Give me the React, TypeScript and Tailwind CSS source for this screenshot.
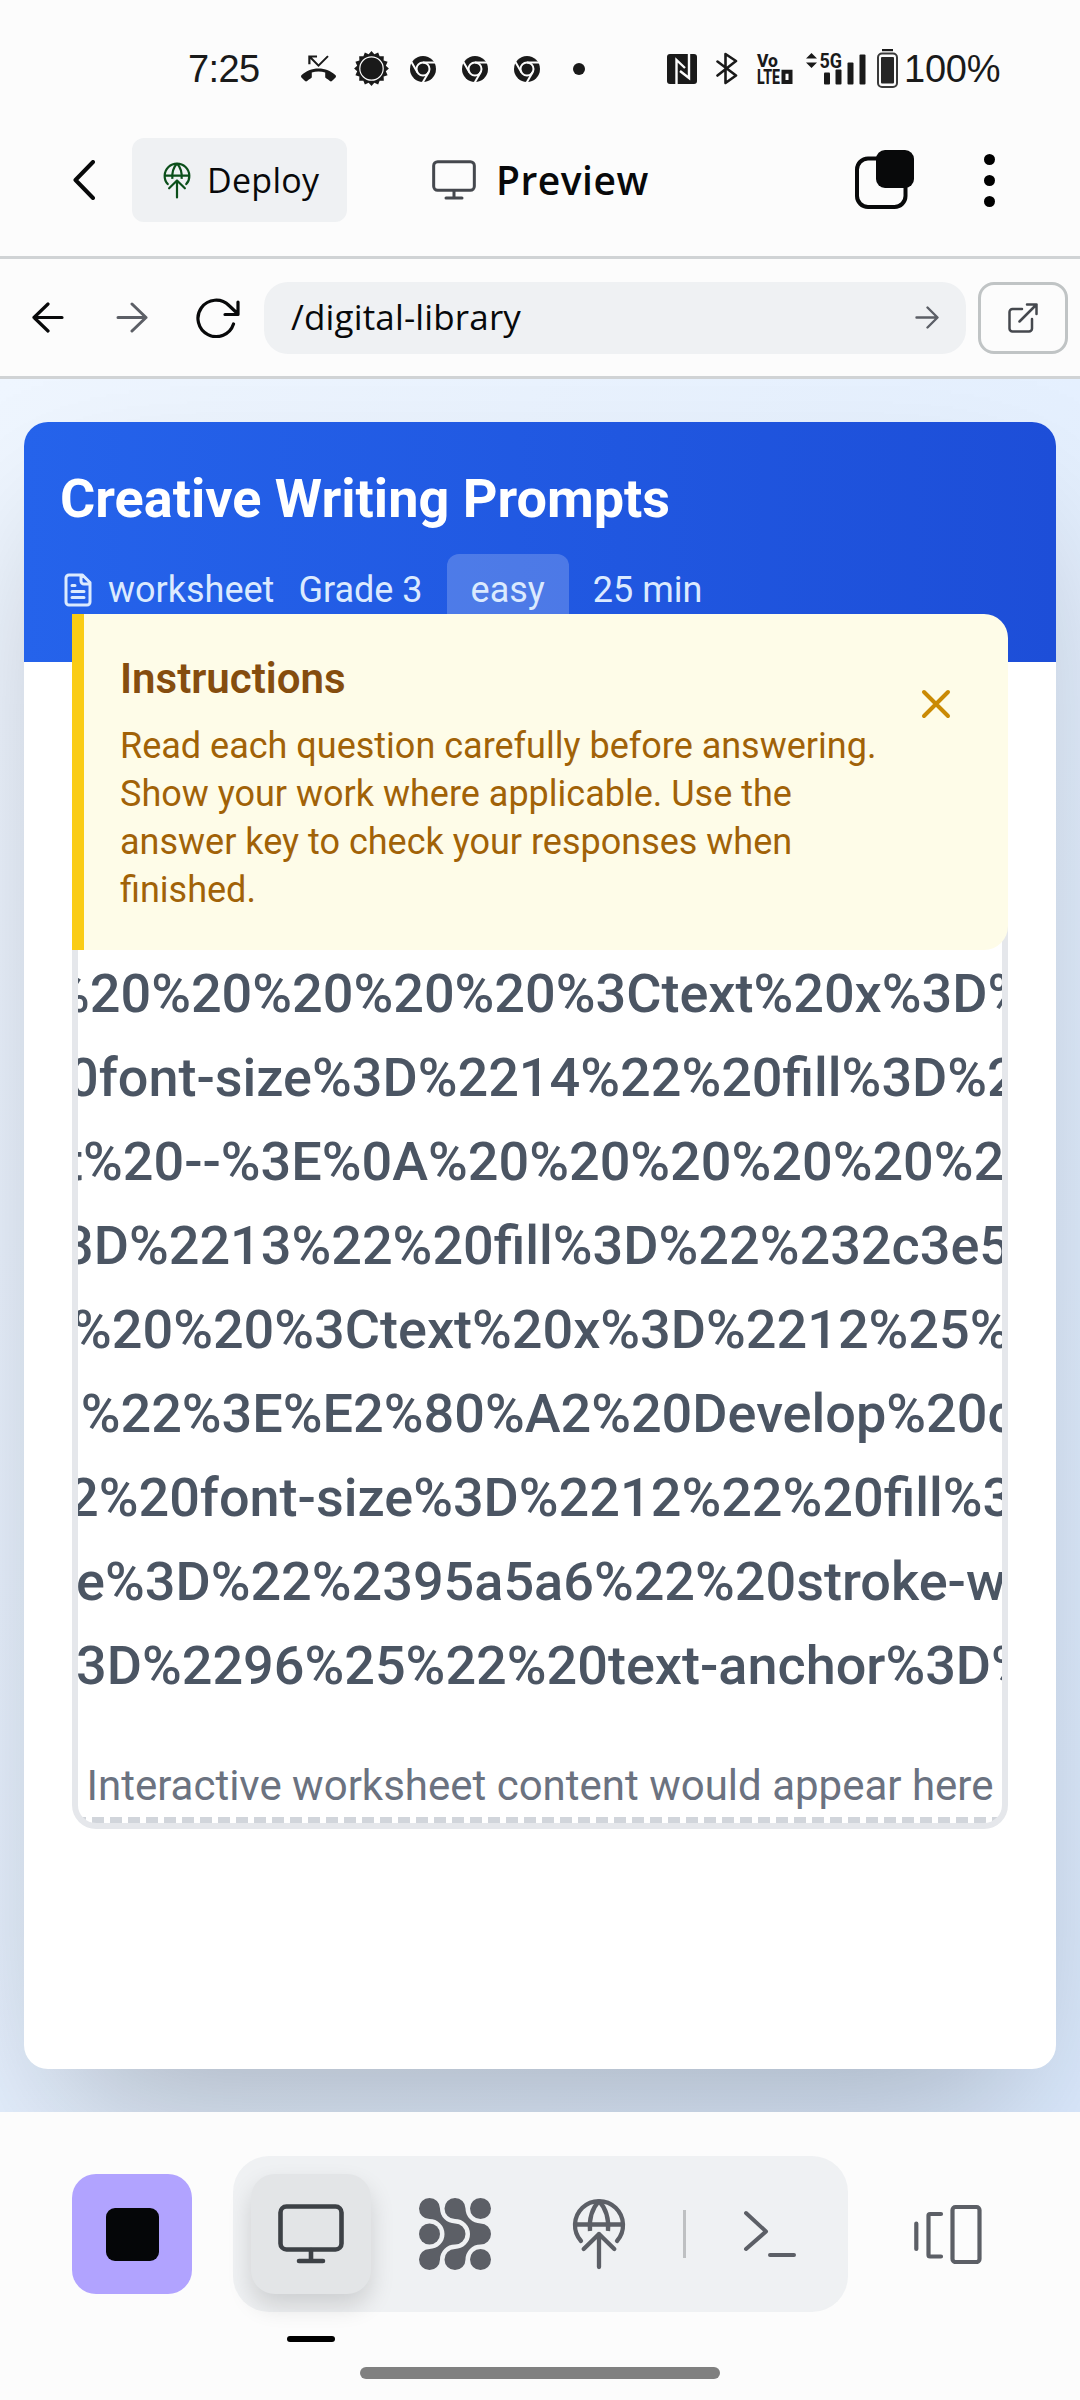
import React from "react";

const lines: { text: string; shift: string }[] = [
  { text: "%20%20%20%20%20%3Ctext%20x%3D%", shift: "-ml-[28px]" },
  { text: "0font-size%3D%2214%22%20fill%3D%2", shift: "-ml-[10px]" },
  { text: "t%20--%3E%0A%20%20%20%20%20%2", shift: "-ml-[13px]" },
  { text: "3D%2213%22%20fill%3D%22%232c3e5", shift: "-ml-[15px]" },
  { text: "%20%20%3Ctext%20x%3D%2212%25%", shift: "-ml-[6px]" },
  { text: "0%22%3E%E2%80%A2%20Develop%20c", shift: "-ml-[28px]" },
  { text: "2%20font-size%3D%2212%22%20fill%3", shift: "-ml-[10px]" },
  { text: "e%3D%22%2395a5a6%22%20stroke-w", shift: "-ml-[2px]" },
  { text: "3D%2296%25%22%20text-anchor%3D%", shift: "-ml-[2px]" },
];

function GlobeUp({ className }: { className: string }) {
  return (
    <svg viewBox="0 0 54 72" className={className} fill="none" stroke="currentColor" strokeWidth="4.3" strokeLinecap="round" strokeLinejoin="round">
      <path d="M9 43A24 24 0 1 1 45 43M3 26.5H51" />
      <path d="M27 3C20.500 10 17 21 18 33M27 3C33.500 10 37 21 36 33" strokeLinecap="butt" />
      <path d="M27 69V36M11.700 51L27 36L42.300 51" />
    </svg>
  );
}

function Monitor({ className, sw }: { className: string; sw: number }) {
  return (
    <svg viewBox="0 0 66 60" className={className} fill="none" stroke="currentColor" strokeWidth={sw} strokeLinecap="round">
      <rect x="2.500" y="2.500" width="61" height="43" rx="6" />
      <path d="M33 46V57M21 57H45" />
    </svg>
  );
}

function Chrome({ className }: { className: string }) {
  return (
    <svg viewBox="-13 -13 26 26" className={className}>
      <circle r="13" fill="#1a1a1a" />
      <circle r="6.500" fill="#1a1a1a" stroke="#fcfcfc" strokeWidth="2" />
      <g stroke="#fcfcfc" strokeWidth="2">
        <path d="M0 -6.500H13" />
        <path d="M0 -6.500H13" transform="rotate(120)" />
        <path d="M0 -6.500H13" transform="rotate(240)" />
      </g>
    </svg>
  );
}

function Sun() {
  const pts = Array.from({ length: 32 }, (_, i) => {
    const r = i % 2 ? 14.6 : 17.4;
    const a = (i * Math.PI) / 16;
    return `${(r * Math.sin(a)).toFixed(2)},${(-r * Math.cos(a)).toFixed(2)}`;
  }).join(" ");
  return (
    <svg viewBox="-17.500 -17.500 35 35" className="ml-[18px] h-[35px] w-[35px]">
      <polygon points={pts} fill="#1a1a1a" />
      <circle r="11.700" fill="#1a1a1a" stroke="#fcfcfc" strokeWidth="1.200" />
    </svg>
  );
}

function StatusBar() {
  return (
    <div className="flex h-[137px] items-center pl-[188px] font-['Liberation_Sans'] text-[38px] leading-none text-[#1a1a1a]">
      <span className="w-[73px] whitespace-nowrap tracking-[-0.6px]">7:25</span>
      <svg viewBox="0 0 24 24" className="ml-[40px] h-[35px] w-[35px]" fill="currentColor">
        <path d="M23.700 16.670C20.660 13.780 16.540 12 12 12S3.340 13.780.290 16.670c-.180.180-.290.430-.290.710s.110.530.290.710l2.480 2.480c.180.180.430.290.710.290.270 0 .520-.110.700-.280.790-.740 1.690-1.360 2.660-1.850.330-.160.560-.500.560-.900v-3.100c1.450-.480 3-.730 4.600-.730s3.150.250 4.600.730v3.100c0 .390.230.740.560.900.980.490 1.870 1.120 2.660 1.850.180.180.430.280.700.280.280 0 .530-.110.710-.290l2.480-2.480c.180-.180.290-.430.290-.710s-.120-.520-.300-.700zM6.500 5.500L12 11l7-7-1-1-6 6-4.500-4.500H11V3H5v6h1.500V5.500z" />
      </svg>
      <Sun />
      <Chrome className="ml-[21px] h-[26px] w-[26px]" />
      <Chrome className="ml-[26px] h-[26px] w-[26px]" />
      <Chrome className="ml-[26px] h-[26px] w-[26px]" />
      <span className="ml-[33px] size-[12px] rounded-full bg-[#1a1a1a]" />
      <svg viewBox="0 0 30 30" className="ml-[82px] h-[30px] w-[30px]">
        <rect width="30" height="30" rx="3" fill="#1a1a1a" />
        <path d="M9.500 30V6L18 14M22 0V24L13 17" fill="none" stroke="#fcfcfc" strokeWidth="2.400" />
      </svg>
      <svg viewBox="0 0 22 33" className="ml-[19px] h-[33px] w-[22px]" fill="none" stroke="currentColor" strokeWidth="2.600" strokeLinejoin="round" strokeLinecap="round">
        <path d="M1.500 9.500L20 23.500L9.500 31V2L20 9L1.500 23.500" />
      </svg>
      <svg viewBox="0 0 36 32" className="ml-[19px] h-[32px] w-[36px] overflow-visible" fill="currentColor">
        <text x="0" y="14" fontFamily="Roboto" fontWeight="800" fontSize="19" textLength="21" lengthAdjust="spacingAndGlyphs">Vo</text>
        <text x="0" y="31" fontFamily="Roboto" fontWeight="800" fontSize="20" textLength="23" lengthAdjust="spacingAndGlyphs">LTE</text>
        <path d="M26.500 18.800H33.500V29H26.500Z" fill="none" stroke="currentColor" strokeWidth="4" />
      </svg>
      <svg viewBox="0 0 60 34" className="ml-[13px] h-[34px] w-[60px] overflow-visible" fill="currentColor">
        <path d="M0 6.500L5.500 1L11 6.500ZM0 10.500H11L5.500 16Z" />
        <text x="13.500" y="15.500" fontFamily="Roboto" fontWeight="700" fontSize="20.500" textLength="22.500" lengthAdjust="spacingAndGlyphs">5G</text>
        <rect x="18" y="20.500" width="6" height="12" rx="1" />
        <rect x="29.500" y="17.500" width="6" height="15" rx="1" />
        <rect x="41.500" y="10.500" width="6" height="22" rx="1" />
        <rect x="53.500" y="2.500" width="6" height="30" rx="1" />
      </svg>
      <svg viewBox="0 0 21 39" className="ml-[11px] h-[39px] w-[21px]">
        <rect x="5" y="0" width="11" height="2.200" fill="#1a1a1a" />
        <rect x="1" y="4.500" width="19" height="33.500" rx="4" fill="none" stroke="#3a3a3a" strokeWidth="2" />
        <rect x="4" y="8" width="13" height="26.500" rx="1" fill="#262626" />
      </svg>
      <span className="ml-[6px] tracking-[-0.2px]">100%</span>
    </div>
  );
}

function AppHeader() {
  return (
    <header className="flex h-[122px] items-center border-b-[3px] border-[#d0d3d5] pb-[33px] pl-[73px] font-['Open_Sans'] text-[#08090a]">
      <svg viewBox="0 0 22 40" className="h-[40px] w-[22px]" fill="none" stroke="currentColor" strokeWidth="4" strokeLinecap="round" strokeLinejoin="round">
        <path d="M20 2L2.500 20L20 38" />
      </svg>
      <button className="ml-[37px] flex h-[84px] w-[215px] items-center rounded-xl bg-[#eff1f3] pl-[31px]">
        <GlobeUp className="h-[37px] w-[28px] text-[#0b4f1a]" />
        <span className="ml-[16px] whitespace-nowrap text-[34px] tracking-[0.3px]">Deploy</span>
      </button>
      <Monitor className="ml-[85px] h-[40px] w-[44px] text-[#45484e]" sw={4.5} />
      <span className="ml-[20px] w-[152px] whitespace-nowrap text-[39px] font-semibold tracking-[0.5px]">Preview</span>
      <svg viewBox="0 0 60 60" className="ml-[207px] h-[60px] w-[60px]">
        <rect x="2" y="8.500" width="48.500" height="48.500" rx="11" fill="none" stroke="#08090a" strokeWidth="4" />
        <rect x="21" y="0" width="38" height="38" rx="9" fill="#08090a" />
      </svg>
      <span className="ml-[69px] flex flex-col gap-[10px]">
        <span className="size-[11px] rounded-full bg-black" />
        <span className="size-[11px] rounded-full bg-black" />
        <span className="size-[11px] rounded-full bg-black" />
      </span>
    </header>
  );
}

function UrlBar() {
  return (
    <div className="flex h-[120px] items-center border-b-[3px] border-[#d0d3d5] pl-[32px] text-[#08090a]">
      <svg viewBox="0 0 32 31" className="h-[31px] w-[32px]" fill="none" stroke="currentColor" strokeWidth="3.200" strokeLinecap="round" strokeLinejoin="round">
        <path d="M16 2L2 15.500L16 29M2 15.500H30" />
      </svg>
      <svg viewBox="0 0 32 31" className="ml-[52px] h-[31px] w-[32px] text-[#5c5f66]" fill="none" stroke="currentColor" strokeWidth="3" strokeLinecap="round" strokeLinejoin="round">
        <path d="M16 2L30 15.500L16 29M2 15.500H30" />
      </svg>
      <svg viewBox="0 0 44 40" className="ml-[48px] h-[40px] w-[44px]" fill="none" stroke="currentColor" strokeWidth="3.200" strokeLinecap="round" strokeLinejoin="round">
        <path d="M37.500 26A18.200 18.200 0 1 1 33 7.500L42 16M42 4V16.500H29" />
      </svg>
      <div className="ml-[24px] flex h-[72px] w-[702px] items-center justify-between rounded-[24px] bg-[#eff1f3] pr-[27px] pl-[27px]">
        <span className="whitespace-nowrap font-['Open_Sans'] text-[35px] tracking-[0.15px]">/digital-library</span>
        <svg viewBox="0 0 24 23" className="h-[23px] w-[24px] text-[#5c5f66]" fill="none" stroke="currentColor" strokeWidth="2.400" strokeLinecap="round" strokeLinejoin="round">
          <path d="M12.500 1.500L22.500 11.500L12.500 21.500M1.500 11.500H22" />
        </svg>
      </div>
      <button className="ml-[12px] flex h-[72px] w-[90px] items-center justify-center rounded-[16px] border-[3px] border-[#c0c4c5]">
        <svg viewBox="0 0 30 30" className="h-[30px] w-[30px] text-[#45484e]" fill="none" stroke="currentColor" strokeWidth="2.500" strokeLinecap="round" strokeLinejoin="round">
          <path d="M14 6H4.500A3 3 0 0 0 1.500 9V25.500A3 3 0 0 0 4.500 28.500H21A3 3 0 0 0 24 25.500V16M19 1.500H28.500V11M28.500 1.500L11.500 18.500" />
        </svg>
      </button>
    </div>
  );
}

function WorksheetCard() {
  return (
    <main className="h-[1733px] overflow-hidden bg-linear-to-br from-[#eff6ff] to-[#dbeafe] px-[24px] pt-[43px] font-['Roboto']">
      <section className="h-[1647px] overflow-clip rounded-[24px] bg-white shadow-[0_75px_150px_-36px_rgba(0,0,0,0.25)]">
        <div className="h-[240px] bg-linear-to-r from-[#2563eb] to-[#1d4ed8] px-[36px] pt-[36px]">
          <h1 className="text-[54px] leading-[81px] font-bold text-white">Creative Writing Prompts</h1>
          <div className="mt-[15px] flex h-[72px] items-center text-[36px] leading-[48px] text-[#dbeafe]">
            <svg viewBox="0 0 24 24" className="h-[36px] w-[36px]" fill="none" stroke="currentColor" strokeWidth="2" strokeLinecap="round" strokeLinejoin="round">
              <path d="M15 2H6a2 2 0 0 0-2 2v16a2 2 0 0 0 2 2h12a2 2 0 0 0 2-2V7ZM14 2v4a2 2 0 0 0 2 2h4M10 9H8M16 13H8M16 17H8" />
            </svg>
            <span className="ml-[12px]">worksheet</span>
            <span className="ml-[24px]">Grade 3</span>
            <span className="ml-[24px] rounded-xl bg-white/20 px-[24px] py-[12px]">easy</span>
            <span className="ml-[24px]">25 min</span>
          </div>
        </div>
        <div className="px-[48px]">
          <div className="relative z-10 -mt-[48px] flex h-[336px] justify-between rounded-r-[24px] border-l-[12px] border-[#facc15] bg-[#fefce8] pt-[36px] pl-[36px]">
            <div className="w-[775px]">
              <h2 className="text-[42px] leading-[57px] font-semibold text-[#854d0e]">Instructions</h2>
              <p className="mt-[15px] text-[36px] leading-[48px] text-[#a16207]">
                Read each question carefully before answering. Show your work where applicable. Use the answer key to check your responses when finished.
              </p>
            </div>
            <svg viewBox="0 0 24 24" className="mt-[30px] mr-[48px] h-[48px] w-[48px] text-[#ca8a04]" fill="none" stroke="currentColor" strokeWidth="2" strokeLinecap="round">
              <path d="M18 6L6 18M6 6L18 18" />
            </svg>
          </div>
          <div className="-mt-[24px] h-[903px] overflow-hidden rounded-b-[24px] border-x-[6px] border-b-[6px] border-[#e5e7eb] pt-[26px]">
            {lines.map((l) => (
              <div key={l.text} className="h-[84px] text-[54px] leading-[84px] font-medium whitespace-nowrap text-[#4b5563]">
                <span className={`block ${l.shift}`}>{l.text}</span>
              </div>
            ))}
            <p className="mt-[48px] text-center text-[42px] leading-[60px] whitespace-nowrap text-[#6b7280]">
              Interactive worksheet content would appear here
            </p>
            <div className="mt-[1px] -ml-[4px] h-[6px] bg-[repeating-linear-gradient(90deg,#d1d5db_0px,#d1d5db_12px,transparent_12px,transparent_18px)]" />
          </div>
        </div>
      </section>
    </main>
  );
}

function Blob({ x }: { x: number }) {
  return (
    <path
      transform={`translate(${x} 0)`}
      d="M21 10.500A15 15 0 0 0 36 25.500A10.500 10.500 0 0 1 36 46.500A15 15 0 0 0 21 61.500A10.500 10.500 0 1 1 10.500 51A15 15 0 0 0 10.500 21A10.500 10.500 0 1 1 21 10.500Z"
    />
  );
}

function BottomNav() {
  return (
    <nav className="relative h-[288px] pt-[44px] text-[#5c5f66]">
      <div className="flex items-center pl-[72px]">
        <button className="flex size-[120px] items-center justify-center rounded-[24px] bg-[#b1a3ff]">
          <span className="size-[53px] rounded-[9px] bg-[#050608]" />
        </button>
        <div className="ml-[41px] flex h-[156px] w-[615px] items-center rounded-[36px] bg-[#eff1f3] pl-[18px]">
          <div className="flex size-[120px] items-center justify-center rounded-[24px] bg-[#e3e5e7] text-[#3d4146] shadow-[0_12px_24px_rgba(0,0,0,0.14)]">
            <Monitor className="h-[60px] w-[66px]" sw={4.6} />
          </div>
          <svg viewBox="0 0 72 72" className="ml-[48px] h-[72px] w-[72px]" fill="currentColor">
            <Blob x={0} />
            <Blob x={25.5} />
            <circle cx="61.500" cy="10.500" r="10.500" />
            <circle cx="10.500" cy="36" r="10.500" />
            <circle cx="61.500" cy="61.500" r="10.500" />
          </svg>
          <GlobeUp className="ml-[81px] h-[72px] w-[54px]" />
          <span className="ml-[57px] h-[48px] w-[3px] bg-[#bec0c2]" />
          <svg viewBox="0 0 54 48" className="ml-[57px] h-[48px] w-[54px]" fill="none" stroke="currentColor" strokeWidth="4" strokeLinecap="round" strokeLinejoin="round">
            <path d="M3 3L23 21.500L3 39M27 45H51" />
          </svg>
        </div>
        <svg viewBox="0 0 68 60" className="ml-[66px] h-[60px] w-[68px]" fill="none" stroke="currentColor" strokeWidth="4.200" strokeLinecap="round" strokeLinejoin="round">
          <path d="M2.300 19.500V45M27 10H16Q14.500 10 14.500 11.500V51Q14.500 52.500 16 52.500H27" />
          <rect x="38.500" y="3" width="27" height="55" rx="3" />
        </svg>
      </div>
      <div className="mt-[24px] ml-[287px] h-[6px] w-[48px] rounded-full bg-black" />
      <div className="mx-auto mt-[25px] h-[12px] w-[360px] rounded-full bg-[#808080]" />
    </nav>
  );
}

export default function App() {
  return (
    <div className="h-[2400px] w-[1080px] overflow-hidden bg-[#fcfcfc]">
      <StatusBar />
      <AppHeader />
      <UrlBar />
      <WorksheetCard />
      <BottomNav />
    </div>
  );
}
